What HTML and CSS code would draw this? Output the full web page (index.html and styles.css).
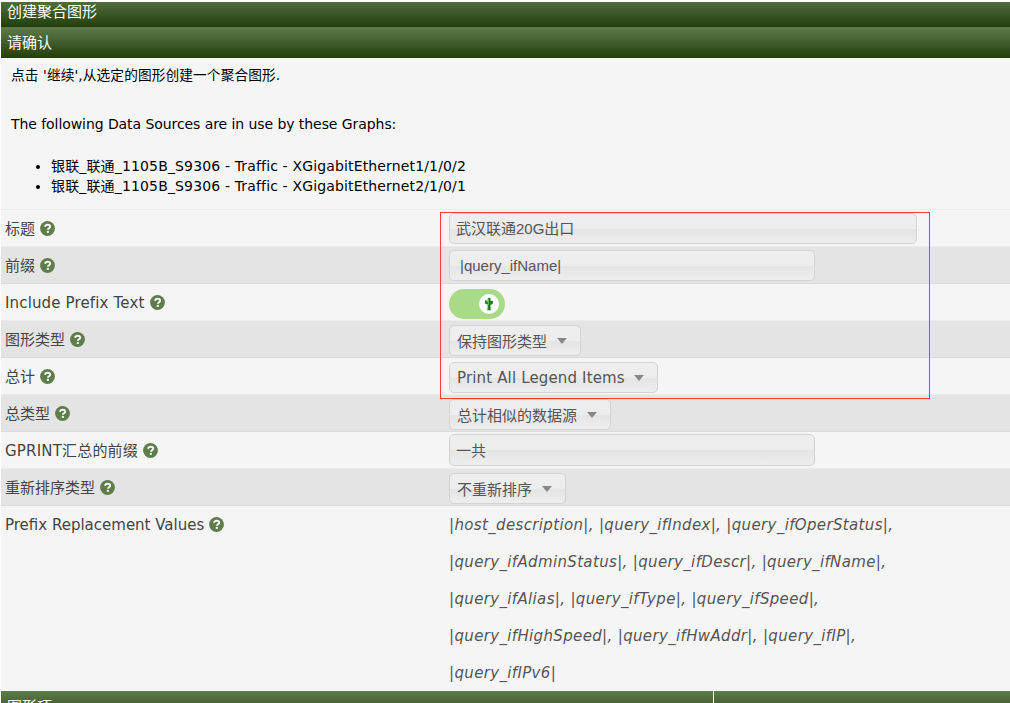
FILE: index.html
```html
<!DOCTYPE html>
<html lang="zh-CN">
<head>
<meta charset="utf-8">
<title>创建聚合图形</title>
<link rel="stylesheet" href="styles.css">
</head>
<body>
<svg class="defs" aria-hidden="true">
  <symbol id="help" viewBox="0 0 15 15">
    <circle cx="7.5" cy="7.5" r="7.4" fill="#5f7d4b"/>
    <path d="M5 5.7C5.3 4.3 6.3 3.7 7.6 3.7c1.5 0 2.6.8 2.6 2 0 1.5-2.3 1.6-2.3 3.1" fill="none" stroke="#f5f5f5" stroke-width="1.9"/>
    <rect x="6.8" y="9.9" width="2.1" height="2" fill="#f5f5f5"/>
  </symbol>
</svg>
<main class="page">
  <header class="title-bar">创建聚合图形</header>
  <h2 class="section-bar">请确认</h2>
  <section class="intro">
    <p class="message">点击 '继续',从选定的图形创建一个聚合图形.</p>
    <p class="sources-title">The following Data Sources are in use by these Graphs:</p>
    <ul class="sources">
      <li>银联_联通_1105B_S9306 - Traffic - XGigabitEthernet1/1/0/2</li>
      <li>银联_联通_1105B_S9306 - Traffic - XGigabitEthernet2/1/0/1</li>
    </ul>
  </section>
  <form class="form">
    <div class="row">
      <div class="label">标题<svg class="help"><use href="#help"/></svg></div>
      <div class="field"><div class="control input wide">武汉联通20G出口</div></div>
    </div>
    <div class="row">
      <div class="label">前缀<svg class="help"><use href="#help"/></svg></div>
      <div class="field"><div class="control input indented">|query_ifName|</div></div>
    </div>
    <div class="row">
      <div class="label"><span class="latin spaced">Include Prefix Text</span><svg class="help"><use href="#help"/></svg></div>
      <div class="field toggle-field"><div class="toggle"><div class="knob">
        <svg class="cactus" viewBox="0 0 10 14"><path d="M3.6 2.2Q3.6.8 5 .8t1.4 1.4V4l1-.6 1.3.8v2.4L7.500 7.800H6.400v4.400l1 1H2.800l.8-1V7.200H2L1 6.200V3.600l1-.7.8.7v1.200h.8z" fill="#268a2a"/><path d="M5.400 1h.8v12h-.8zM7.600 4h.9v2.800h-.9z" fill="#14601a"/><path d="M4 2h.8v6H4z" fill="#6cc850"/></svg>
      </div></div></div>
    </div>
    <div class="row">
      <div class="label">图形类型<svg class="help"><use href="#help"/></svg></div>
      <div class="field select-field"><div class="control select">保持图形类型<i class="arrow"></i></div></div>
    </div>
    <div class="row">
      <div class="label">总计<svg class="help"><use href="#help"/></svg></div>
      <div class="field select-field"><div class="control select"><span class="spaced latin">Print All Legend Items</span><i class="arrow"></i></div></div>
    </div>
    <div class="row">
      <div class="label">总类型<svg class="help"><use href="#help"/></svg></div>
      <div class="field select-field"><div class="control select">总计相似的数据源<i class="arrow"></i></div></div>
    </div>
    <div class="row">
      <div class="label gprint">GPRINT汇总的前缀<svg class="help"><use href="#help"/></svg></div>
      <div class="field total-field"><div class="control input total">一共</div></div>
    </div>
    <div class="row">
      <div class="label">重新排序类型<svg class="help"><use href="#help"/></svg></div>
      <div class="field select-field"><div class="control select">不重新排序<i class="arrow"></i></div></div>
    </div>
    <div class="row values-row">
      <div class="label"><span class="latin">Prefix Replacement Values</span><svg class="help"><use href="#help"/></svg></div>
      <div class="values">|host_description|, |query_ifIndex|, |query_ifOperStatus|,<br>|query_ifAdminStatus|, |query_ifDescr|, |query_ifName|,<br>|query_ifAlias|, |query_ifType|, |query_ifSpeed|,<br>|query_ifHighSpeed|, |query_ifHwAddr|, |query_ifIP|,<br>|query_ifIPv6|</div>
    </div>
  </form>
  <footer class="items-bar"><div class="items-title">图形项</div><div class="items-rest"></div></footer>
  <div class="highlight"></div>
</main>
</body>
</html>
```
FILE: styles.css
```css
* { box-sizing: border-box; }
body {
  margin: 0;
  height: 703px;
  overflow: hidden;
  background: #fff;
  font-family: "DejaVu Sans", "Noto Sans CJK SC", sans-serif;
}
.defs { position: absolute; width: 0; height: 0; }
.page {
  position: relative;
  height: 703px;
  padding: 2px 0 0 1px;
  overflow: hidden;
}
.title-bar, .section-bar, .items-bar {
  margin: 0;
  color: #fff;
  font-size: 15px;
  font-weight: 400;
}
.title-bar {
  height: 25px;
  padding-left: 6px;
  line-height: 20px;
  background: linear-gradient(#4f6e3b, #213e0b);
}
.section-bar {
  height: 31px;
  padding-left: 6px;
  line-height: 33px;
  background: linear-gradient(#5f7d4b, #213e0b);
}
.intro {
  height: 152px;
  padding: 7px 10px 0;
  background: #f5f5f5;
  border-bottom: 1px solid #ebebeb;
  color: #000;
  font-size: 14px;
  line-height: 20px;
}
.message, .sources-title { margin: 0; white-space: nowrap; }
.message { height: 49px; font-size: 13.7px; letter-spacing: 0.1px; }
.sources-title { height: 42px; letter-spacing: -0.07px; }
.sources { margin: 0; padding-left: 40px; letter-spacing: 0.15px; }
.form { color: #444; font-size: 15px; }
.row {
  display: flex;
  height: 37px;
  background: #f5f5f5;
  border-bottom: 1px solid #ececec;
}
.row:nth-child(even) { background: #e4e4e4; border-bottom-color: #dadada; }
.label {
  display: flex;
  align-items: center;
  width: 448px;
  height: 36px;
  padding: 0 0 2px 4px;
  white-space: nowrap;
}
.label .latin { padding-top: 4px; }
.spaced { letter-spacing: 0.15px; }
.gprint { letter-spacing: 0.19px; }
.help { width: 15px; height: 15px; margin: 2px 0 0 5px; }
.field { padding-top: 3px; }
.select-field { padding-top: 4px; }
.total-field { padding-top: 2px; }
.toggle-field { padding-top: 5px; }
.control {
  display: flex;
  align-items: center;
  height: 31px;
  border: 1px solid #d3d3d3;
  border-radius: 5px;
  background: linear-gradient(#eee 0%, #ededed 50%, #e4e4e4 51%, #eee 100%);
  color: #555;
  white-space: nowrap;
}
.input {
  width: 366px;
  padding: 0 0 2px 6px;
  font-family: "Liberation Sans", "Noto Sans CJK SC", sans-serif;
}
.wide { width: 468px; }
.indented { padding: 0 0 0 10px; }
.total { height: 32px; }
.select { padding: 0 13px 1px 8px; }
.select .latin { padding-top: 2px; margin-right: -1px; }
.select { padding-left: 7px; }
.arrow {
  margin: 1px 0 0 10px;
  border: 5px solid transparent;
  border-top: 6px solid #888;
  border-bottom: 0;
}
.toggle {
  display: flex;
  align-items: center;
  justify-content: flex-end;
  width: 56px;
  height: 30px;
  padding-right: 6px;
  border-radius: 15px;
  background: #a8da87;
}
.knob {
  display: flex;
  align-items: center;
  justify-content: center;
  width: 20px;
  height: 20px;
  border-radius: 50%;
  background: #fff;
}
.cactus { width: 10px; height: 14px; }
.values-row { height: 185px; border-bottom: 0; }
.values {
  padding-top: 1px;
  color: #555;
  font-style: italic;
  letter-spacing: 0.35px;
  line-height: 37px;
  white-space: nowrap;
}
.items-bar { display: flex; height: 31px; gap: 1px; line-height: 33px; }
.values-row { overflow: hidden; }
.items-title, .items-rest { background: linear-gradient(#5f7d4b, #213e0b); }
.items-title { width: 712px; padding-left: 6px; }
.items-rest { flex: 1; }
.highlight {
  position: absolute;
  left: 440px;
  top: 212px;
  width: 490px;
  height: 187px;
  border: 1px solid #f53b3b;
}
```
